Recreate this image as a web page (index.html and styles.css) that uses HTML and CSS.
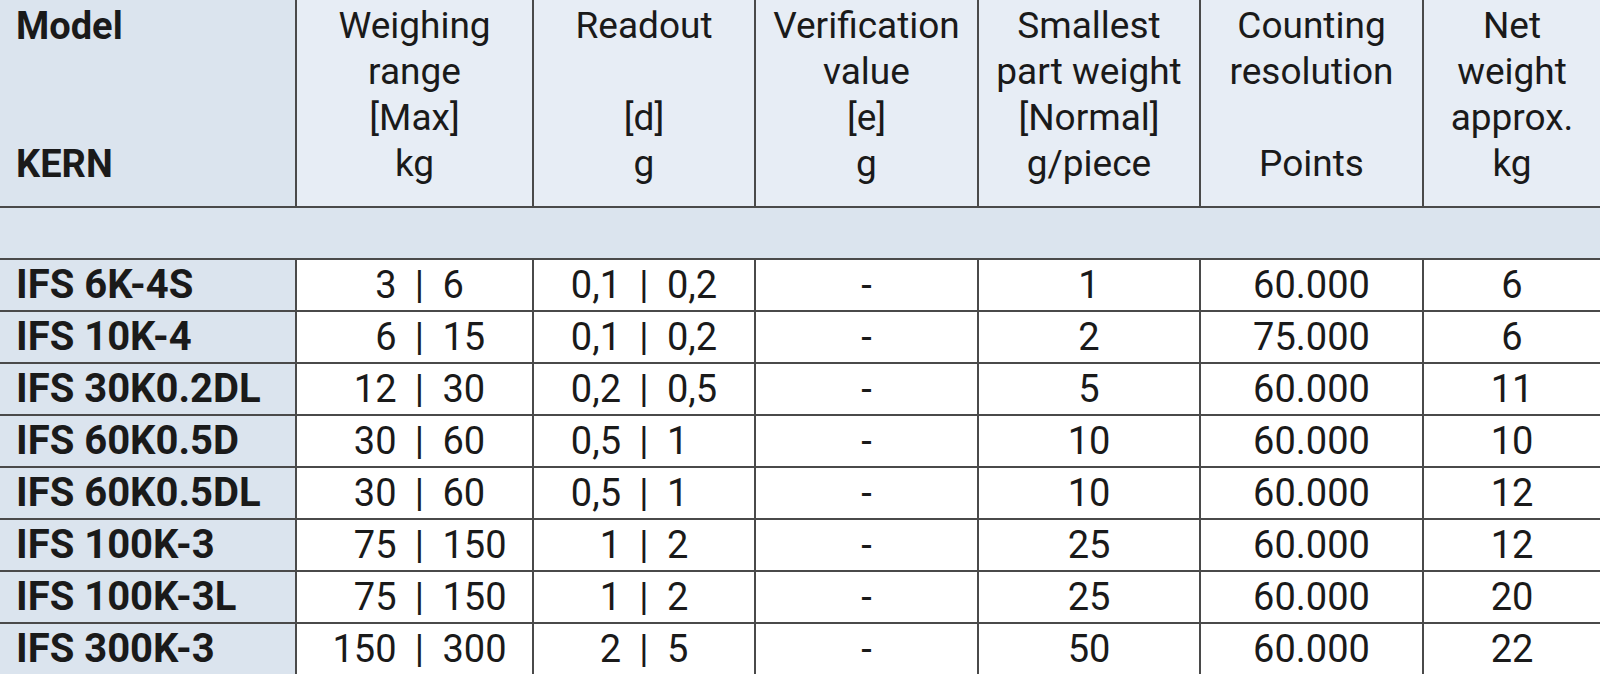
FILE: index.html
```html
<!DOCTYPE html>
<html lang="en">
<head>
<meta charset="utf-8">
<title>KERN IFS</title>
<link rel="stylesheet" href="styles.css">
</head>
<body>
<table class="spec">
  <colgroup>
    <col class="c-model">
    <col class="c-range">
    <col class="c-readout">
    <col class="c-verif">
    <col class="c-part">
    <col class="c-count">
    <col class="c-net">
  </colgroup>
  <thead>
    <tr class="head">
      <th class="hmodel">Model<br><br><br>KERN</th>
      <th>Weighing<br>range<br>[Max]<br>kg</th>
      <th>Readout<br><br>[d]<br>g</th>
      <th>Verification<br>value<br>[e]<br>g</th>
      <th>Smallest<br>part weight<br>[Normal]<br>g/piece</th>
      <th>Counting<br>resolution<br><br>Points</th>
      <th>Net<br>weight<br>approx.<br>kg</th>
    </tr>
  </thead>
  <tbody>
    <tr class="band"><td colspan="7"></td></tr>
    <tr>
      <td class="model">IFS 6K-4S</td>
      <td class="pair range"><span class="l">3</span><span class="sep">|</span><span class="r">6</span></td>
      <td class="pair"><span class="l">0,1</span><span class="sep">|</span><span class="r">0,2</span></td>
      <td>-</td><td>1</td><td>60.000</td><td>6</td>
    </tr>
    <tr>
      <td class="model">IFS 10K-4</td>
      <td class="pair range"><span class="l">6</span><span class="sep">|</span><span class="r">15</span></td>
      <td class="pair"><span class="l">0,1</span><span class="sep">|</span><span class="r">0,2</span></td>
      <td>-</td><td>2</td><td>75.000</td><td>6</td>
    </tr>
    <tr>
      <td class="model">IFS 30K0.2DL</td>
      <td class="pair range"><span class="l">12</span><span class="sep">|</span><span class="r">30</span></td>
      <td class="pair"><span class="l">0,2</span><span class="sep">|</span><span class="r">0,5</span></td>
      <td>-</td><td>5</td><td>60.000</td><td>11</td>
    </tr>
    <tr>
      <td class="model">IFS 60K0.5D</td>
      <td class="pair range"><span class="l">30</span><span class="sep">|</span><span class="r">60</span></td>
      <td class="pair"><span class="l">0,5</span><span class="sep">|</span><span class="r">1</span></td>
      <td>-</td><td>10</td><td>60.000</td><td>10</td>
    </tr>
    <tr>
      <td class="model">IFS 60K0.5DL</td>
      <td class="pair range"><span class="l">30</span><span class="sep">|</span><span class="r">60</span></td>
      <td class="pair"><span class="l">0,5</span><span class="sep">|</span><span class="r">1</span></td>
      <td>-</td><td>10</td><td>60.000</td><td>12</td>
    </tr>
    <tr>
      <td class="model">IFS 100K-3</td>
      <td class="pair range"><span class="l">75</span><span class="sep">|</span><span class="r">150</span></td>
      <td class="pair"><span class="l">1</span><span class="sep">|</span><span class="r">2</span></td>
      <td>-</td><td>25</td><td>60.000</td><td>12</td>
    </tr>
    <tr>
      <td class="model">IFS 100K-3L</td>
      <td class="pair range"><span class="l">75</span><span class="sep">|</span><span class="r">150</span></td>
      <td class="pair"><span class="l">1</span><span class="sep">|</span><span class="r">2</span></td>
      <td>-</td><td>25</td><td>60.000</td><td>20</td>
    </tr>
    <tr>
      <td class="model">IFS 300K-3</td>
      <td class="pair range"><span class="l">150</span><span class="sep">|</span><span class="r">300</span></td>
      <td class="pair"><span class="l">2</span><span class="sep">|</span><span class="r">5</span></td>
      <td>-</td><td>50</td><td>60.000</td><td>22</td>
    </tr>
  </tbody>
</table>
</body>
</html>
```

FILE: styles.css
```css
html, body {
  margin: 0;
  padding: 0;
  background: #ffffff;
}

body {
  font-family: Roboto, "Liberation Sans", sans-serif;
  color: #1a1a1a;
  overflow: hidden;
}

.spec {
  width: 1600px;
  border-collapse: collapse;
  table-layout: fixed;
}

.c-model { width: 296px; }
.c-range { width: 237px; }
.c-readout { width: 222px; }
.c-verif { width: 223px; }
.c-part { width: 222px; }
.c-count { width: 223px; }
.c-net { width: 177px; }

.spec th,
.spec td {
  border: 2px solid #4a4a4a;
  padding: 0;
}

.spec tr > :first-child { border-left: none; }
.spec tr > :last-child { border-right: none; }
.head th { border-top: none; }

.head {
  height: 207px;
}

.head th {
  vertical-align: top;
  background: #e7edf5;
  font-weight: 400;
  font-size: 37px;
  line-height: 46px;
  text-align: center;
  padding-top: 3px;
  white-space: nowrap;
}

.head th.hmodel {
  background: #dbe4ee;
  font-weight: 700;
  font-size: 38px;
  text-align: left;
  padding-left: 16px;
}

.band td {
  background: #dbe4ee;
  height: 50px;
}

.spec tbody tr {
  height: 52px;
}

.spec tbody td {
  font-size: 38px;
  line-height: 48px;
  text-align: center;
  vertical-align: middle;
  white-space: nowrap;
}

.spec tbody td.model {
  background: #dbe4ee;
  font-weight: 700;
  text-align: left;
  padding-left: 16px;
  font-size: 40px;
}

.pair .l,
.pair .sep,
.pair .r {
  display: inline-block;
}

.pair .l {
  width: 86px;
  text-align: right;
}

.pair .sep {
  width: 46px;
  text-align: center;
}

.pair .r {
  width: 86px;
  text-align: left;
}

.pair.range {
  padding-left: 10px;
}
```
